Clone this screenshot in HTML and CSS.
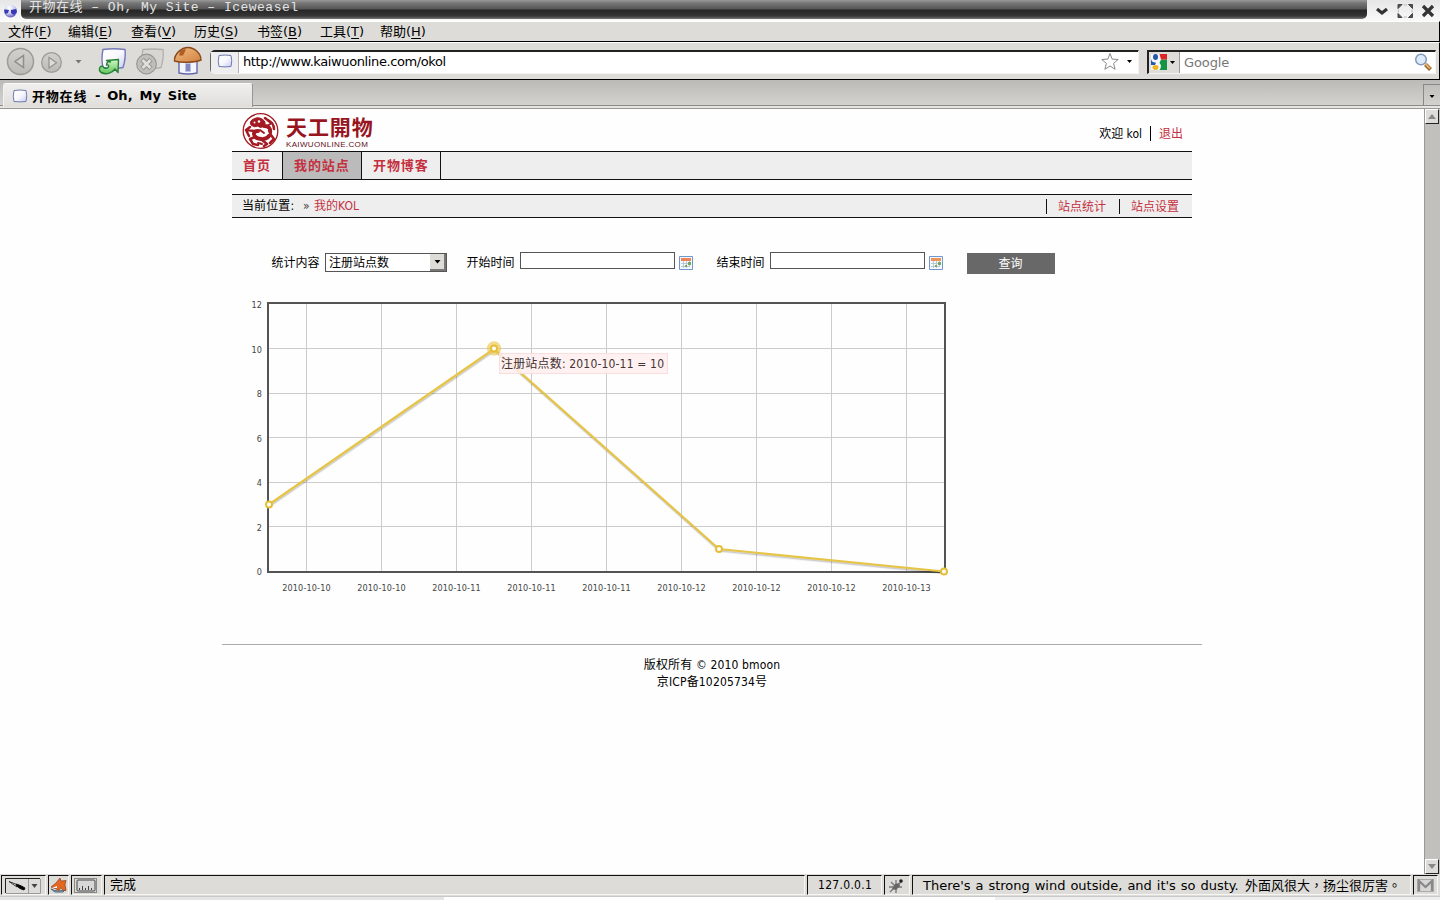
FILE: index.html
```html
<!DOCTYPE html>
<html lang="zh-CN">
<head>
<meta charset="utf-8">
<title>开物在线 - Oh, My Site</title>
<link rel="stylesheet" href="styles.css">
</head>
<body>
<div class="window">
  <header class="titlebar">
    <svg class="app-icon" width="21" height="21" viewBox="0 0 21 21"><defs><radialGradient id="globe" cx=".4" cy=".25" r=".8"><stop offset="0" stop-color="#fff"/><stop offset=".55" stop-color="#c9ccee"/><stop offset="1" stop-color="#4a4ab8"/></radialGradient></defs><circle cx="10.5" cy="11" r="6.500" fill="url(#globe)"/><path d="M4 10c2-1 3 0 5 0l-1 3-3 1zM11 10l5-1 1 3-3 3-3-2z" fill="#3838b4"/></svg>
    <div class="title-plate"><span class="title-text">开物在线 – Oh, My Site – Iceweasel</span></div>
    <svg class="win-buttons" width="72" height="21" viewBox="1368 0 72 21">
      <path d="M1377 9l5 4 5-4" fill="none" stroke="#333" stroke-width="3.2"/>
      <path d="M1398 8.500V4.500h4zM1408.500 4.500h4v4zM1412.500 13.500v4h-4zM1402 17.500h-4v-4z" fill="#555" stroke="#444"/>
      <path d="M1398.500 9.500v3M1412 9.500v3M1403.500 5h3.500M1403.500 17h3.500" stroke="#bbb"/>
      <path d="M1423 6l10 10M1433 6l-10 10" stroke="#333" stroke-width="3.200"/>
    </svg>
  </header>
  <nav class="menubar">
    <span class="menu">文件(<u>F</u>)</span><span class="menu menu-wide">编辑(<u>E</u>)</span><span class="menu menu-wide">查看(<u>V</u>)</span><span class="menu menu-wide">历史(<u>S</u>)</span><span class="menu menu-wide">书签(<u>B</u>)</span><span class="menu">工具(<u>T</u>)</span><span class="menu">帮助(<u>H</u>)</span>
  </nav>
  <div class="toolbar">
    <svg class="nav-icons" width="210" height="37" viewBox="0 43 210 37">
      <defs>
        <linearGradient id="disc" x2="0" y2="1"><stop offset="0" stop-color="#d2d1cd"/><stop offset="1" stop-color="#bbbab6"/></linearGradient>
        <linearGradient id="paper" x2="1" y2="1"><stop offset="0" stop-color="#fff"/><stop offset=".5" stop-color="#f8f8fe"/><stop offset="1" stop-color="#c9cdf4"/></linearGradient>
        <linearGradient id="leaf" x2="0" y2="1"><stop offset="0" stop-color="#d2f7c6"/><stop offset="1" stop-color="#60c45c"/></linearGradient>
        <linearGradient id="roof" x2="1" y2="1"><stop offset="0" stop-color="#f2bd80"/><stop offset="1" stop-color="#d28243"/></linearGradient>
      </defs>
      <circle cx="20.500" cy="61.500" r="13" fill="url(#disc)" stroke="#9c9b98" stroke-width="1.500"/>
      <path d="M23.500 55.500v12l-8.500-6z" fill="#d0cfcb" stroke="#8f8e8b" stroke-width="1.500"/>
      <circle cx="51.500" cy="62.500" r="9.800" fill="url(#disc)" stroke="#9c9b98" stroke-width="1.300"/>
      <path d="M49 57.500v10.500l7.500-5.200z" fill="#dedddb" stroke="#969592" stroke-width="1.300"/>
      <path d="M75.500 60h6l-3 3.500z" fill="#777"/>
      <path d="M103 49.500q11-1.500 22 0 1 9-2 18-9 2-20 0-2-9 0-18z" fill="url(#paper)" stroke="#7579b8" stroke-width="1.400"/>
      <path d="M106.500 60.500l12-1-.5 13-3-3.500c-3 4.500-9 6-14 3.500-3-3-1.500-6.500 1.500-6.500 1 2.500 4 3 5.500 1.500 1.500-2 .5-3-1.500-2.500 0-3 2-4 4-3z" fill="url(#leaf)" stroke="#278035" stroke-width="1.400" stroke-linejoin="round"/>
      <path d="M143 49.500q10-1 20 0 1 9-2 18-8 2-18 0-2-9 0-18z" fill="#d7d6d2" stroke="#b1b0ac" stroke-width="1.300"/>
      <circle cx="146.500" cy="64" r="9.800" fill="#c0bfbb" stroke="#989793" stroke-width="1.200"/>
      <path d="M142 59.500l9 9M151 59.500l-9 9" stroke="#999894" stroke-width="5"/><path d="M142.500 60l8 8M150.500 60l-8 8" stroke="#e0dfdc" stroke-width="2.600"/>
      <path d="M179 60h18v13q-9 2-18 0z" fill="#f4f4fc" stroke="#6569a9" stroke-width="1.400"/>
      <path d="M185.500 63.500h5v8h-5z" fill="#8087c1" stroke="#bcc0e4"/>
      <path d="M174.500 61c-.5-7 7-13.500 13.500-13.500s13 6 13 12.500c-5 2.500-20 3-26.500 1z" fill="url(#roof)" stroke="#8a4a1c" stroke-width="1.400"/>
      <path d="M180 51.500q3-3 6-2l-3 6h-4z" fill="#b05c25"/>
    </svg>
    <div class="urlbar">
      <div class="favicon-cell"><svg width="16" height="14" viewBox="0 0 16 14"><path d="M2 1.500q6-1 12 0 1.500 5 0 11-6 .8-12 0-1.500-5 0-11z" fill="url(#paper)" stroke="#6e7ab0"/></svg></div>
      <span class="url">http://www.kaiwuonline.com/okol</span>
      <svg width="40" height="20" viewBox="1098 53 40 20"><path d="M1110 53.500l2.200 5.600 6 .4-4.600 3.900 1.500 5.900-5.100-3.300-5.100 3.300 1.500-5.900-4.600-3.900 6-.4z" fill="#fff" stroke="#888" stroke-width="1"/><path d="M1127 60h5l-2.500 3z"/></svg>
    </div>
    <div class="searchbar">
      <div class="engine"><svg width="28" height="21" viewBox="1150 51 28 21"><path d="M1152 53h16v16h-16z" fill="#f5f7fa"/><path d="M1162 58.500h6V69h-7.500q3-4 0-7z" fill="#139447"/><path d="M1160.500 53h7.500v5.500h-6z" fill="#df2428"/><ellipse cx="1156.500" cy="56" rx="2.500" ry="3" fill="#2458ad"/><path d="M1152 58q1 4 5 3.500l-1 2.500h-4z" fill="#2458ad"/><ellipse cx="1156.500" cy="66.500" rx="3" ry="2.400" fill="#f3b421"/><path d="M1171 60h5l-2.500 3z"/></svg></div>
      <span class="search-hint">Google</span>
      <svg width="22" height="20" viewBox="1413 53 22 20"><path d="M1425.500 64.500l5 5" stroke="#996528" stroke-width="4"/><path d="M1425 63.500l5 5" stroke="#deb16f" stroke-width="2"/><circle cx="1421" cy="59.500" r="5.300" fill="#dcebfa" stroke="#8299bb" stroke-width="1.500"/></svg>
    </div>
  </div>
  <div class="tabstrip">
    <div class="tab"><svg width="16" height="14" viewBox="0 0 16 14"><path d="M2 1.500q6-1 12 0 1.500 5 0 11-6 .8-12 0-1.500-5 0-11z" fill="url(#paper)" stroke="#6e7ab0"/></svg><span class="tab-cn">开物在线</span><span class="tab-en">- Oh, My Site</span></div>
    <div class="tab-list"><svg width="6" height="4" viewBox="0 0 6 4"><path d="M.5 0h5L3 3z"/></svg></div>
  </div>

  <div class="viewport">
    <div class="page">
      <div class="masthead">
        <div class="logo">
          <svg width="38" height="38" viewBox="0 0 38 38"><circle cx="18.500" cy="19" r="17.300" fill="#fff" stroke="#a31a22" stroke-width="1.300"/><g fill="none" stroke="#a31a22" stroke-linecap="round" stroke-linejoin="round"><path d="M10 8q5-4 10-1 5 3 2 7-4 3-6 0-4 2-7-1-2-3 1-5z" fill="#a31a22"/><path d="M22 14q7 0 6 7-1 6-8 6-7 0-8-5 0-3 4-3" stroke-width="4"/><path d="M26 8q6 3 6 9M23 6l5 4M29 23l3 4-4 4M20 28l5 4-3 2M13 25l-5 2 3 5 5 1M12 19l-7-1M8 15l-4 3 3 6" stroke-width="2.500"/><path d="M18 18l4 3M25 14l5-3M16 31l4 1" stroke-width="2"/></g><circle cx="17" cy="9.500" r="1.300" fill="#fff"/><circle cx="12.500" cy="10.500" r="1" fill="#fff"/><path d="M14 22l3 2M20 25l2-2M25 22l2-1M24 17l2 1" stroke="#fff" stroke-width="1.200"/></svg>
          <div class="logo-words"><span class="logo-cn">天工開物</span><span class="logo-en">KAIWUONLINE.COM</span></div>
        </div>
        <div class="welcome"><span class="user">欢迎 kol</span><a class="logout">退出</a></div>
      </div>
      <div class="mainnav"><a class="nav-first">首页</a><a class="nav-current">我的站点</a><a class="nav-last">开物博客</a></div>
      <div class="crumbs">
        <div class="where"><span class="where-label">当前位置:</span><span class="raquo">»</span><a>我的KOL</a></div>
        <div class="sublinks"><a>站点统计</a><a>站点设置</a></div>
      </div>
      <div class="filters">
        <label class="label-what">统计内容</label>
        <div class="select"><span>注册站点数</span><div class="select-btn"><svg width="7" height="4" viewBox="0 0 7 4"><path d="M.5 0h6l-3 3.500z"/></svg></div></div>
        <label class="label-start">开始时间</label><div class="field"></div>
        <svg class="calendar" width="14" height="14" viewBox="0 0 14 14"><path d="M.5.500h13v13H.500z" fill="#f5f9fd" stroke="#7197d0"/><path d="M2 2h10v3H2z" fill="#ec8459"/><path d="M2 7.500h10M2 10.500h8M4.500 5v7M7.500 5v7M10.500 5v6" stroke="#b9c7d4"/><path d="M6 9h2v2H6zM9 6h3v3H9z" fill="#73a865"/></svg>
        <label class="label-end">结束时间</label><div class="field"></div>
        <svg class="calendar" width="14" height="14" viewBox="0 0 14 14"><path d="M.5.500h13v13H.500z" fill="#f5f9fd" stroke="#7197d0"/><path d="M2 2h10v3H2z" fill="#ec9459"/><path d="M2 7.500h10M2 10.500h8M4.500 5v7M7.500 5v7M10.500 5v6" stroke="#b9c7d4"/><path d="M6 9h2v2H6zM9 6h3v3H9z" fill="#73a865"/></svg>
        <div class="query">查询</div>
      </div>
      <svg class="chart" width="720" height="320" viewBox="242 290 720 320">
        <path class="grid" d="M306.500 304V571M381.500 304V571M456.500 304V571M531.500 304V571M606.500 304V571M681.500 304V571M756.500 304V571M831.500 304V571M906.500 304V571M269 348.500H944M269 393.500H944M269 437.500H944M269 482.500H944M269 526.500H944"/>
        <path class="frame" d="M268 303H945V572H268z"/>
        <path class="shadow shadow-far" d="M269.500 507L494.500 351.500 719.500 551.500 944 573.500"/>
        <path class="shadow" d="M269.500 506L494.500 350.500 719.500 550.500 944 573"/>
        <path class="line" d="M269 504.500L494 349 719 549 944 571.500"/>
        <circle class="halo" cx="494" cy="348.500" r="5.200"/>
        <circle class="dot" cx="269" cy="504.500" r="3"/><circle class="dot" cx="494" cy="348.500" r="3"/><circle class="dot" cx="719" cy="549" r="3"/><circle class="dot" cx="944" cy="571.500" r="3"/>
        <g class="ticks ticks-y"><text x="262" y="308">12</text><text x="262" y="353">10</text><text x="262" y="397">8</text><text x="262" y="442">6</text><text x="262" y="486">4</text><text x="262" y="531">2</text><text x="262" y="575">0</text></g>
        <g class="ticks ticks-x"><text x="306.500" y="591">2010-10-10</text><text x="381.500" y="591">2010-10-10</text><text x="456.500" y="591">2010-10-11</text><text x="531.500" y="591">2010-10-11</text><text x="606.500" y="591">2010-10-11</text><text x="681.500" y="591">2010-10-12</text><text x="756.500" y="591">2010-10-12</text><text x="831.500" y="591">2010-10-12</text><text x="906.500" y="591">2010-10-13</text></g>
        <rect class="tip" x="499.500" y="353.500" width="168" height="20"/>
        <text class="tip-text" x="501" y="368" textLength="163">注册站点数: 2010-10-11 = 10</text>
      </svg>
      <footer class="footer"><p>版权所有 © 2010 bmoon</p><p>京ICP备10205734号</p></footer>
    </div>
    <div class="scrollbar">
      <div class="scroll-btn"><svg width="8" height="5" viewBox="0 0 8 5"><path d="M4 0l4 5H0z" fill="#888"/></svg></div>
      <div class="scroll-btn"><svg width="8" height="5" viewBox="0 0 8 5"><path d="M4 5L0 0h8z" fill="#888"/></svg></div>
    </div>
  </div>

  <div class="statusbar">
    <div class="cell cell-picker"><svg width="38" height="17" viewBox="5 877 38 17"><path d="M6.500 893V878.500H41" fill="none" stroke="#222"/><path d="M41.500 879v14.500H7M29.500 879v14" fill="none" stroke="#999"/><path d="M10 881.500l9 3.500-1 2z" fill="#fff" stroke="#333"/><path d="M17.500 884l5 2 3.500 2-1 2-4-1.500-4-3z" stroke="#111"/><path d="M32.500 884h6l-3 4z" fill="#444"/></svg></div>
    <div class="cell cell-fox"><svg width="18" height="17" viewBox="0 0 18 17"><path d="M1 12q7 4 15 0l-3 3H5z" fill="#96bcd8" stroke="#567"/><path d="M1 10l5-4 4-5 1 3 5-.5-1 4 1 6h-3l-2-3-2 3-4-2z" fill="#e46820" stroke="#8b421d" stroke-width=".7"/><path d="M2 11l5-2v2z" fill="#fff"/></svg></div>
    <div class="cell cell-ruler"><svg width="24" height="17" viewBox="74 877 24 17"><rect x="74.500" y="878.500" width="22" height="14" fill="none" stroke="#888"/><rect x="77" y="880" width="18" height="11" rx="1" fill="#d7d7d7" stroke="#444"/><path d="M79.500 890v-2M82.500 890v-4M85.500 890v-2M88.500 890v-4M91.500 890v-2" stroke="#444"/></svg></div>
    <div class="cell cell-done">完成</div>
    <div class="cell cell-ip">127.0.0.1</div>
    <div class="cell cell-bug"><svg width="18" height="18" viewBox="0 0 18 18"><path d="M3 15l4-4M2 10h5M4 5l4 4M9 3v5M9 16v-4M10 10h5M11 8l4-4" stroke="#777" stroke-width="1.300"/><path d="M5 12l3-5 4-1 1 3-4 4z" fill="#666"/><circle cx="14" cy="4" r="1.800" fill="#222"/></svg></div>
    <div class="cell cell-weather"><span class="weather-en">There's a strong wind outside, and it's so dusty.</span><span class="weather-cn" lang="zh-TW">外面风很大，扬尘很厉害。</span></div>
    <div class="cell cell-mail"><svg width="17" height="13" viewBox="0 0 17 13"><rect x=".5" y=".5" width="16" height="12" fill="#d6d6d4" stroke="#aaa"/><path d="M2 12V2l6.500 6L15 2v10" fill="none" stroke="#888" stroke-width="2.300"/></svg></div>
  </div>
  <div class="panel-edge"><div class="edge-light"></div><div class="edge-dark"></div></div>
</div>
</body>
</html>
```

FILE: styles.css
```css
* { box-sizing: border-box; }
body { margin: 0; font-family: "DejaVu Sans", "Noto Sans CJK SC", sans-serif; font-size: 13px; color: #000; }
svg { display: block; flex: none; }
p { margin: 0; }
.window { width: 1440px; height: 900px; display: flex; flex-direction: column; overflow: hidden; background: #dddcd8; white-space: nowrap; }
.titlebar { display: flex; height: 21px; flex: none; background: linear-gradient(#e6e6e6, #fafafa); }
.title-plate { width: 1346px; height: 19px; padding-left: 8px; border-radius: 0 0 5px 5px; overflow: hidden; background: linear-gradient(#999 0, #777 3px, #555 9px, #262626 10px, #353535 16px, #777 19px); }
.title-text { display: block; font: 13px/16px "Liberation Mono", "Noto Sans CJK SC", monospace; color: #e4e4e4; letter-spacing: 0.49px; }
.win-buttons { margin-left: auto; }
.menubar { display: flex; height: 21px; flex: none; padding-left: 8px; border-top: 1px solid #fff; border-bottom: 1px solid #000; border-right: 1px solid #000; line-height: 19px; }
.menu { width: 60px; }
.menu-wide { width: 63px; }
.menu u { text-underline-offset: 2px; }
.toolbar { display: flex; height: 38px; flex: none; border-top: 1px solid #fff; border-bottom: 1px solid #000; border-right: 1px solid #000; }
.urlbar { display: flex; align-items: center; width: 929px; height: 24px; margin-top: 7px; background: #fff; border: 1px solid #f4f4f2; border-top: 2px solid #222; border-left-color: #666; border-radius: 5px 0 0 5px; }
.favicon-cell { display: flex; align-items: center; justify-content: center; width: 28px; height: 100%; padding-bottom: 3px; border-right: 1px solid #b6aeb0; background: #eeeef0; }
.url { flex: 1; padding-left: 4px; letter-spacing: -0.39px; line-height: 18px; padding-bottom: 2px; }
.searchbar { display: flex; align-items: center; width: 289px; height: 24px; margin: 7px 0 0 8px; background: #fff; border: 1px solid #f4f4f2; border-top: 2px solid #222; border-left: 2px solid #222; }
.engine { width: 31px; border-right: 1px solid #999; background: #deddd9; }
.search-hint { flex: 1; padding-left: 4px; color: #777; line-height: 20px; letter-spacing: -0.1px; }
.tabstrip { display: flex; justify-content: space-between; align-items: flex-start; height: 29px; flex: none; background: linear-gradient(#bcbab6, #d4d2ce 25px, #8c8c89 25px, #8c8c89 26px, #e6e5e2 26px, #e6e5e2 28px, #989895 28px); }
.tab { display: flex; align-items: center; width: 250px; height: 24px; margin: 3px 0 0 3px; padding-left: 8px; border: 1px solid #969592; border-top-color: #f7f7f5; border-left-color: #f1f1ef; border-bottom: 0; border-radius: 3px 3px 0 0; background: linear-gradient(#f0efed, #dfdedb); font-weight: bold; }
.tab-cn { width: 62px; letter-spacing: 0.8px; padding-left: 4px; }
.tab-en { padding-left: 5px; word-spacing: 2.4px; }
.tab-list { display: flex; align-items: center; justify-content: center; width: 17px; height: 22px; margin-top: 4px; padding-top: 3px; border-top: 1px solid #888; border-left: 1px solid #888; }
.viewport { display: flex; height: 765px; flex: none; background: #fefefe; }
.page { width: 1424px; height: 765px; padding: 0 232px; font-family: "DejaVu Sans Condensed", "DejaVu Sans", "Noto Sans CJK SC", sans-serif; font-stretch: condensed; font-size: 12px; }
.page a { color: #c5303e; }
.masthead { display: flex; justify-content: space-between; height: 42px; padding: 3px 9px 0 10px; }
.logo { display: flex; }
.logo-words { display: flex; flex-direction: column; padding: 4px 0 0 6px; }
.logo-cn { height: 22px; font: 700 21px/23px "Liberation Sans", "Noto Sans CJK TC", sans-serif; color: #98141e; letter-spacing: 0.9px; }
.logo-en { font: 8px/9px "Liberation Sans", sans-serif; color: #641018; letter-spacing: 0.35px; margin-top: 2px; }
.welcome { display: flex; align-items: flex-start; padding-top: 14px; line-height: 16px; }
.user { height: 15px; padding-right: 8px; border-right: 1px solid #000; }
.logout { padding-left: 8px; }
.mainnav { display: flex; height: 29px; border-top: 1px solid #111; border-bottom: 1px solid #111; background: #eee; font-size: 13px; font-weight: bold; line-height: 27px; letter-spacing: 0.9px; }
.mainnav a { border-right: 1px solid #111; padding-left: 11px; }
.nav-first { width: 51px; }
.nav-current { width: 79px; background: #bbb; }
.nav-last { width: 79px; }
.crumbs { display: flex; justify-content: space-between; align-items: center; height: 24px; margin-top: 14px; border-top: 1px solid #111; border-bottom: 1px solid #111; background: #eee; }
.where { display: flex; padding-left: 10px; line-height: 20px; }
.where-label { width: 61px; letter-spacing: 0.1px; }
.raquo { width: 11px; color: #444; }
.sublinks { display: flex; line-height: 16px; }
.sublinks a { width: 73px; height: 15px; padding-left: 11px; border-left: 1px solid #111; }
.filters { display: flex; align-items: flex-start; height: 38px; margin-top: 34px; padding-left: 39.5px; line-height: 20px; }
.label-what { width: 53.5px; padding-top: 1px; }
.label-start, .label-end { padding-top: 1px; width: 53.5px; }
.label-start { margin-left: 19.5px; }
.label-end { margin-left: 23.5px; }
.select { display: flex; justify-content: space-between; width: 122px; height: 19px; margin-top: 1px; padding-left: 3px; border: 1px solid #555; background: #fff; line-height: 18px; }
.select-btn { display: flex; align-items: center; justify-content: center; width: 16px; height: 17px; background: #dedcd7; border-right: 2px solid #777; border-bottom: 2px solid #777; }
.field { width: 155px; height: 17px; border: 1px solid #555; background: #fff; }
.calendar { margin: 4px 0 0 4px; }
.query { width: 88px; height: 21px; margin: 1px 0 0 24px; padding-right: 1px; background: #686868; color: #fff; text-align: center; line-height: 22px; }
.chart { margin: 0 0 0 10px; }
.grid { stroke: #ccc; fill: none; }
.frame { stroke: #545454; stroke-width: 2; fill: none; }
.line { stroke: #e6c445; stroke-width: 2.2; fill: none; }
.shadow { stroke: #000; stroke-opacity: 0.13; stroke-width: 2; fill: none; }
.shadow-far { stroke-opacity: 0.07; }
.halo { fill: #f5d67a; stroke: #efc64e; stroke-width: 4; opacity: 0.65; }
.dot { fill: #fff; stroke: #e6bf3a; stroke-width: 2; }
.ticks { font-size: 9px; fill: #444; letter-spacing: 0.15px; }
.ticks-y { text-anchor: end; }
.ticks-x { text-anchor: middle; }
.tip { fill: #ffeeee; fill-opacity: 0.85; stroke: #fadddd; }
.tip-text { font-size: 12px; fill: #433; }
.footer { width: 980px; margin: 34px 0 0 -10px; padding-top: 12px; border-top: 1px solid #aaa; text-align: center; line-height: 17px; letter-spacing: 0.15px; }
.scrollbar { display: flex; flex-direction: column; justify-content: space-between; width: 16px; height: 765px; padding-right: 1px; border-left: 1px solid #999; background: #c1c0bc; }
.scroll-btn { display: flex; align-items: center; justify-content: center; width: 14px; height: 15px; background: #dddcd8; border: 1px solid #fff; border-right-color: #222; border-bottom-color: #222; }
.statusbar { display: flex; gap: 2px; height: 22px; flex: none; padding: 1px 0 0 1px; line-height: 19px; }
.cell { height: 20px; border: 1px solid #f6f6f4; border-top-color: #111; border-left-color: #111; }
.cell svg { margin: 1px 0 0 2px; }
.cell-picker { width: 45px; }
.cell-fox { width: 21px; }
.cell-fox svg { margin-left: 1px; }
.cell-ruler { width: 31px; }
.cell-done { width: 701px; padding-left: 5px; line-height: 18px; }
.cell-ip { width: 75px; padding-left: 10px; font-family: "DejaVu Sans Condensed", "DejaVu Sans", sans-serif; font-stretch: condensed; font-size: 12px; letter-spacing: 0.3px; }
.cell-bug { width: 26px; }
.cell-weather { display: flex; width: 499px; padding-left: 10px; }
.weather-en { width: 322px; word-spacing: 0.8px; }
.weather-cn { font-family: "Noto Sans CJK TC", sans-serif; line-height: 18px; }
.cell-mail { width: 25px; }
.cell-mail svg { margin: 3px 0 0 3px; }
.panel-edge { display: flex; height: 4px; flex: none; margin-top: auto; border-top: 1px solid #c9c9c7; background: #eee; }
.edge-light { width: 444px; background: #e4e4e4; }
.edge-dark { width: 551px; background: #fff; }
```
